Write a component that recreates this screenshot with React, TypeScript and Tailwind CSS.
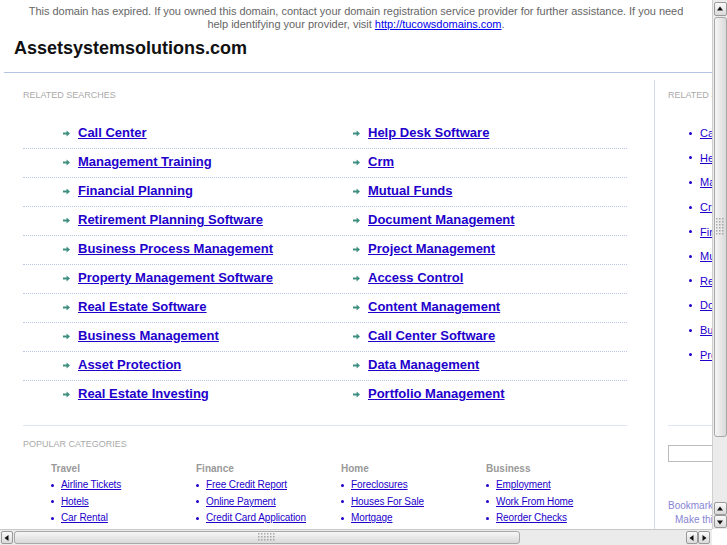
import React from "react";

const pairs: [string, string][] = [
  ["Call Center", "Help Desk Software"],
  ["Management Training", "Crm"],
  ["Financial Planning", "Mutual Funds"],
  ["Retirement Planning Software", "Document Management"],
  ["Business Process Management", "Project Management"],
  ["Property Management Software", "Access Control"],
  ["Real Estate Software", "Content Management"],
  ["Business Management", "Call Center Software"],
  ["Asset Protection", "Data Management"],
  ["Real Estate Investing", "Portfolio Management"],
];

const sideLinks = [
  "Call Center",
  "Help Desk Software",
  "Management Training",
  "Crm",
  "Financial Planning",
  "Mutual Funds",
  "Retirement Planning Software",
  "Document Management",
  "Business Process Management",
  "Project Management",
];

const categories = [
  { name: "Travel", items: ["Airline Tickets", "Hotels", "Car Rental"] },
  { name: "Finance", items: ["Free Credit Report", "Online Payment", "Credit Card Application"] },
  { name: "Home", items: ["Foreclosures", "Houses For Sale", "Mortgage"] },
  { name: "Business", items: ["Employment", "Work From Home", "Reorder Checks"] },
];

const Arrow = () => (
  <svg width="7" height="7" viewBox="0 0 7 7" className="shrink-0">
    <path d="M0 2.5h3.6V0.4L7 3.5 3.6 6.6V4.5H0z" fill="#3f8f80" />
  </svg>
);

const Dot = () => <span className="inline-block w-[3px] h-[3px] rounded-full bg-[#2200cc] shrink-0" />;

const Grip = ({ cols, rows }: { cols: number; rows: number }) => (
  <svg width={cols * 3} height={rows * 3} className="opacity-70">
    {Array.from({ length: cols * rows }).map((_, i) => (
      <rect key={i} x={(i % cols) * 3} y={Math.floor(i / cols) * 3} width="1.5" height="1.5" fill="#8a8a8a" />
    ))}
  </svg>
);

const Tri = ({ dir }: { dir: "up" | "down" | "left" | "right" }) => {
  const d = {
    up: "M1 5.5L4 1.5 7 5.5z",
    down: "M1 2.5L4 6.5 7 2.5z",
    left: "M5.5 1L1.5 4 5.5 7z",
    right: "M2.5 1L6.5 4 2.5 7z",
  }[dir];
  return (
    <svg width="8" height="8" viewBox="0 0 8 8">
      <path d={d} fill="#111" />
    </svg>
  );
};

const SbButton = ({ dir, className }: { dir: "up" | "down" | "left" | "right"; className: string }) => (
  <div
    className={`flex items-center justify-center rounded-[2px] border border-[#9a9a9a] bg-gradient-to-b from-[#fafafa] to-[#dadada] ${className}`}
  >
    <Tri dir={dir} />
  </div>
);

export default function App() {
  return (
    <div className="w-[727px] h-[545px] overflow-hidden bg-white flex flex-col font-['Liberation_Sans',Arial,sans-serif]">
      <div className="flex h-[529px]">
        <div className="w-[712px] h-[529px] overflow-hidden">
          <div className="w-[900px]">
            <div className="w-[712px] text-center text-[11px] leading-[13px] pt-[5px] text-[#666] tracking-[-0.02px]">
              This domain has expired. If you owned this domain, contact your domain registration service provider for further assistance. If you need
              <br />
              help identifying your provider, visit{" "}
              <a href="#" className="text-[#0000ee] underline">
                http://tucowsdomains.com
              </a>
              .
            </div>
            <h1 className="mt-[6px] pl-[14px] text-[18px] leading-[22px] font-bold text-[#111]">Assetsystemsolutions.com</h1>
            <div className="mt-[13px] ml-[4px] border-t border-[#b4c3e1]" />
            <div className="flex pt-[7px]">
              <div className="ml-[4px] w-[651px] h-[500px] border-r border-[#d3dcef] pl-[19px] pt-[10px]">
                <div className="text-[9px] leading-[11px] text-[#aaa]">RELATED SEARCHES</div>
                <div className="mt-[19px] w-[604px]">
                  {pairs.map(([a, b], i) => (
                    <div
                      key={a}
                      className={`flex h-[29px] pt-[5px] ${i < pairs.length - 1 ? "border-b border-dotted border-[#b9c8e6]" : ""}`}
                    >
                      {[a, b].map((t) => (
                        <div key={t} className="w-[290px] pl-[40px] flex items-center gap-[8px] h-[16px]">
                          <Arrow />
                          <a href="#" className="text-[13px] leading-[16px] font-bold text-[#2200cc] underline">
                            {t}
                          </a>
                        </div>
                      ))}
                    </div>
                  ))}
                </div>
                <div className="mt-[15px] w-[604px] border-t border-[#dfe6f3]" />
                <div className="pt-[13px] text-[9px] leading-[11px] text-[#aaa]">POPULAR CATEGORIES</div>
                <div className="mt-[13px] pl-[28px] flex">
                  {categories.map((c) => (
                    <div key={c.name} className="w-[145px]">
                      <div className="text-[10px] leading-[12px] font-bold text-[#999]">{c.name}</div>
                      <div className="mt-[2px]">
                        {c.items.map((it) => (
                          <div key={it} className="flex items-center gap-[7px] h-[16.5px]">
                            <Dot />
                            <a href="#" className="text-[10px] leading-[16px] text-[#2200cc] underline tracking-[-0.1px]">
                              {it}
                            </a>
                          </div>
                        ))}
                      </div>
                    </div>
                  ))}
                </div>
              </div>
              <div className="pl-[13px] pt-[10px] w-[220px]">
                <div className="text-[9px] leading-[11px] text-[#aaa]">RELATED SEARCHES</div>
                <div className="mt-[20px] pl-[21px]">
                  {sideLinks.map((s) => (
                    <div key={s} className="flex items-center gap-[8px] h-[24.6px]">
                      <Dot />
                      <a href="#" className="text-[11px] leading-[14px] text-[#2200cc] underline whitespace-nowrap">
                        {s}
                      </a>
                    </div>
                  ))}
                </div>
                <div className="mt-[58px] w-[200px] border-t border-[#dfe6f3]" />
                <input className="mt-[19px] block w-[120px] h-[17px] border border-[#bbb]" />
                <div className="mt-[37px] text-[10px] leading-[14px] text-[#8585d6] whitespace-nowrap">Bookmark this page</div>
                <div className="pl-[7px] text-[10px] leading-[14px] text-[#8585d6] whitespace-nowrap">Make this your homepage</div>
              </div>
            </div>
          </div>
        </div>
        <div className="w-[15px] h-[529px] bg-[#ebebeb] border-l border-[#cfcfcf] flex flex-col items-center">
          <SbButton dir="up" className="mt-[2px] w-[13px] h-[14px]" />
          <div className="mt-[1px] w-[13px] h-[420px] rounded-[3px] border border-[#a8a8a8] bg-gradient-to-r from-[#f6f6f6] to-[#d9d9d9] flex items-center justify-center">
            <Grip cols={3} rows={6} />
          </div>
          <div className="flex-1" />
          <SbButton dir="up" className="w-[13px] h-[13px]" />
          <SbButton dir="down" className="w-[13px] h-[13px] mb-[1px]" />
        </div>
      </div>
      <div className="flex h-[16px]">
        <div className="w-[712px] h-[16px] bg-[#ebebeb] border-t border-[#c8c8c8] flex items-center">
          <SbButton dir="left" className="ml-[1px] w-[12px] h-[13px]" />
          <div className="ml-[1px] w-[506px] h-[13px] rounded-[3px] border border-[#a8a8a8] bg-gradient-to-b from-[#f6f6f6] to-[#d9d9d9] flex items-center justify-center">
            <Grip cols={6} rows={3} />
          </div>
          <div className="flex-1" />
          <SbButton dir="left" className="w-[12px] h-[13px]" />
          <SbButton dir="right" className="w-[12px] h-[13px] mr-[2px]" />
        </div>
        <div className="w-[15px] bg-white" />
      </div>
    </div>
  );
}
